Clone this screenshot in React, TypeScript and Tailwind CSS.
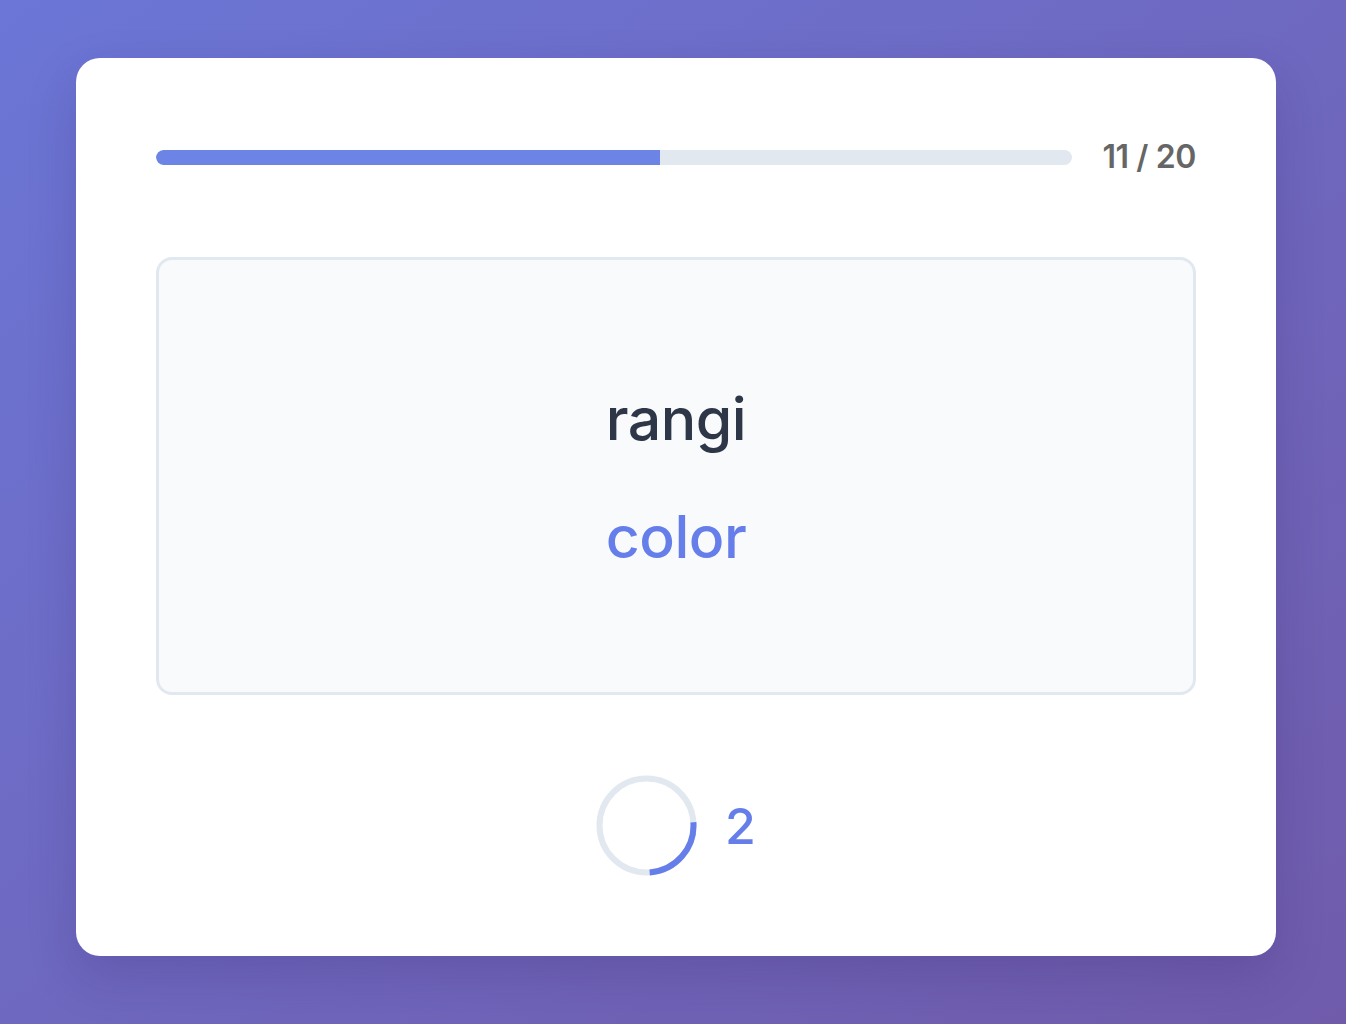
import React from "react";

export default function App() {
  const r = 47;
  const c = 2 * Math.PI * r;
  const frac = 0.25;
  return (
    <div
      className="min-h-[1024px] w-full bg-gradient-to-br from-[#6b76d6] to-[#705bab] pl-[76px] pt-[58px]"
      style={{ fontFamily: "Inter, 'Noto Sans', sans-serif" }}
    >
      <div className="w-[1200px] h-[898px] bg-white rounded-[24px] shadow-[0_20px_50px_rgba(40,20,90,0.18)] px-[80px] pt-[80px] flex flex-col">
        <div className="flex items-center gap-[30px] h-[38px]">
          <div className="flex-1 h-[15px] rounded-full bg-[#e2e8f0] overflow-hidden">
            <div className="h-full w-[55%] bg-[#6b84e5] rounded-l-full" />
          </div>
          <div className="text-[32px] font-semibold text-[#666666] tracking-[-0.4px] leading-none">11 / 20</div>
        </div>
        <div className="mt-[81px] h-[438px] rounded-[16px] border-[3px] border-[#e2e8f0] bg-[#f8fafc] flex flex-col items-center justify-center">
          <div className="mt-[4px] text-[59px] leading-[1.2] font-medium text-[#2d3748] tracking-[-0.5px]">rangi</div>
          <div className="mt-[47px] text-[59px] leading-[1.2] font-medium text-[#667eea] tracking-[-0.5px]">color</div>
        </div>
        <div className="mt-[80px] flex items-center justify-center gap-[28px]">
          <svg width="101" height="101" viewBox="0 0 101 101">
            <circle cx="50.5" cy="50.5" r={r} fill="none" stroke="#e2e8f0" strokeWidth="6" />
            <circle
              cx="50.5"
              cy="50.5"
              r={r}
              fill="none"
              stroke="#667eea"
              strokeWidth="6"
              strokeDasharray={`${c * frac} ${c}`}
              transform="rotate(-4 50.5 50.5)"
            />
          </svg>
          <div className="text-[50px] font-medium text-[#667eea] leading-none">2</div>
        </div>
      </div>
    </div>
  );
}
